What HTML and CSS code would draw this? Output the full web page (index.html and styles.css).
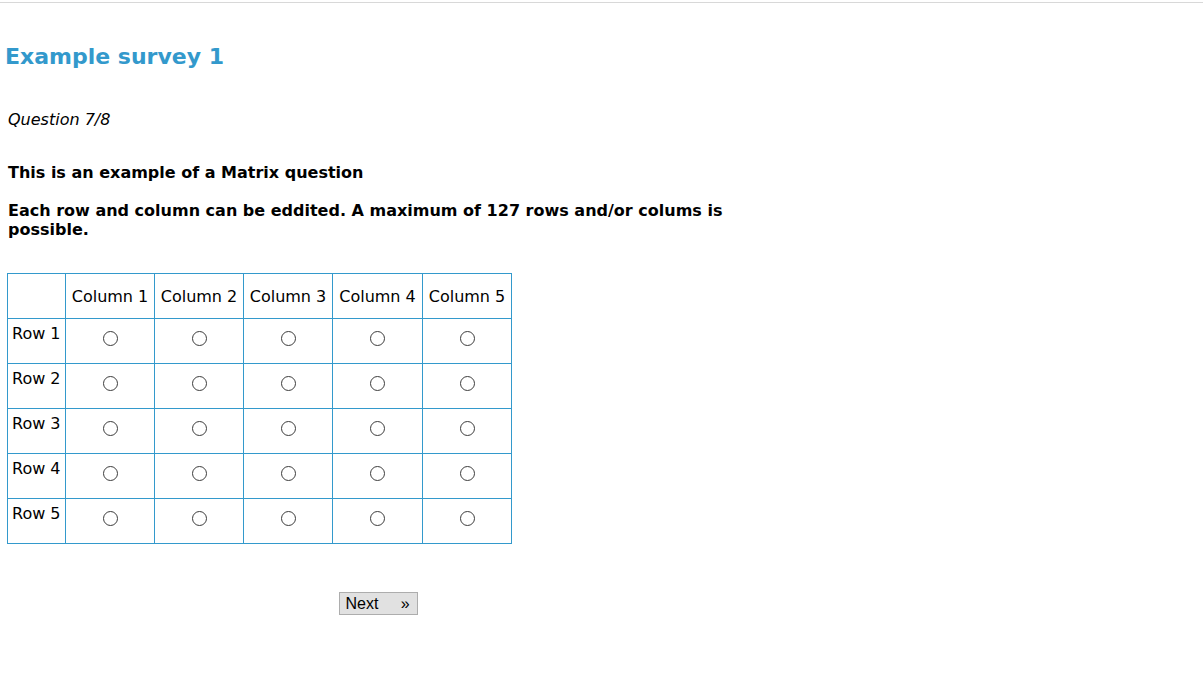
FILE: index.html
```html
<!DOCTYPE html>
<html>
<head>
<meta charset="utf-8">
<link rel="stylesheet" href="styles.css">
</head>
<body>
<div class="topline"></div>
<div class="page">
  <h1 class="title">Example survey 1</h1>
  <p class="progress">Question 7/8</p>
  <p class="qtitle">This is an example of a Matrix question</p>
  <p class="qdesc">Each row and column can be eddited. A maximum of 127 rows and/or colums is possible.</p>
  <table class="matrix">
    <thead>
      <tr><th class="corner"></th><th class="col">Column 1</th><th class="col">Column 2</th><th class="col">Column 3</th><th class="col wide">Column 4</th><th class="col">Column 5</th></tr>
    </thead>
    <tbody>
      <tr><td class="rowlabel">Row 1</td><td><input type="radio" name="r1"></td><td><input type="radio" name="r1"></td><td><input type="radio" name="r1"></td><td><input type="radio" name="r1"></td><td><input type="radio" name="r1"></td></tr>
      <tr><td class="rowlabel">Row 2</td><td><input type="radio" name="r2"></td><td><input type="radio" name="r2"></td><td><input type="radio" name="r2"></td><td><input type="radio" name="r2"></td><td><input type="radio" name="r2"></td></tr>
      <tr><td class="rowlabel">Row 3</td><td><input type="radio" name="r3"></td><td><input type="radio" name="r3"></td><td><input type="radio" name="r3"></td><td><input type="radio" name="r3"></td><td><input type="radio" name="r3"></td></tr>
      <tr><td class="rowlabel">Row 4</td><td><input type="radio" name="r4"></td><td><input type="radio" name="r4"></td><td><input type="radio" name="r4"></td><td><input type="radio" name="r4"></td><td><input type="radio" name="r4"></td></tr>
      <tr><td class="rowlabel">Row 5</td><td><input type="radio" name="r5"></td><td><input type="radio" name="r5"></td><td><input type="radio" name="r5"></td><td><input type="radio" name="r5"></td><td><input type="radio" name="r5"></td></tr>
    </tbody>
  </table>
  <div class="actions">
    <button class="next">Next <span class="arrow">»</span></button>
  </div>
</div>
</body>
</html>
```

FILE: styles.css
```css
html, body {
  margin: 0;
  padding: 0;
  background: #ffffff;
}
body {
  font-family: "DejaVu Sans", Verdana, sans-serif;
  color: #000000;
}
.topline {
  margin-top: 2px;
  border-top: 1px solid #d8d8d8;
}
.page {
  width: 749px;
  padding-left: 7px;
  box-sizing: border-box;
}
.title {
  margin: 40px 0 0 -2px;
  font-size: 22px;
  font-weight: bold;
  color: #3399cc;
  line-height: 28px;
}
.progress {
  margin: 39px 0 0 1px;
  font-size: 16px;
  font-style: italic;
  line-height: 20px;
}
.qtitle {
  margin: 33px 0 0 1px;
  font-weight: bold;
  font-size: 16px;
  line-height: 19px;
}
.qdesc {
  margin: 19px 0 0 1px;
  width: 740px;
  font-weight: bold;
  font-size: 16px;
  line-height: 19px;
}
.matrix {
  margin-top: 34px;
  border-collapse: collapse;
  font-size: 16px;
}
.matrix th, .matrix td {
  border: 1px solid #3399cc;
  height: 44px;
  padding: 0 5px;
  text-align: center;
  vertical-align: middle;
  font-weight: normal;
  white-space: nowrap;
}
.matrix .corner {
  width: 47px;
}
.matrix .col {
  width: 78px;
}
.matrix .col.wide {
  width: 79px;
}
.matrix td.rowlabel {
  vertical-align: top;
  text-align: left;
  height: 39px;
  padding: 5px 4px 0 4px;
}
.matrix input[type="radio"] {
  appearance: none;
  -webkit-appearance: none;
  width: 15px;
  height: 15px;
  margin: 0 0 6px 0;
  border: 1px solid #3c3c3c;
  border-radius: 50%;
  background: #ffffff;
  vertical-align: middle;
}
.actions {
  margin-top: 48px;
  text-align: center;
}
.next {
  font-family: "Liberation Sans", Arial, sans-serif;
  font-size: 16px;
  background: #e1e1e1;
  border: 1px solid #adadad;
  padding: 0 0 0 6px;
  height: 23px;
  width: 79px;
  text-align: left;
  color: #000;
}
.next .arrow {
  margin-left: 18px;
  font-size: 16px;
}
```
